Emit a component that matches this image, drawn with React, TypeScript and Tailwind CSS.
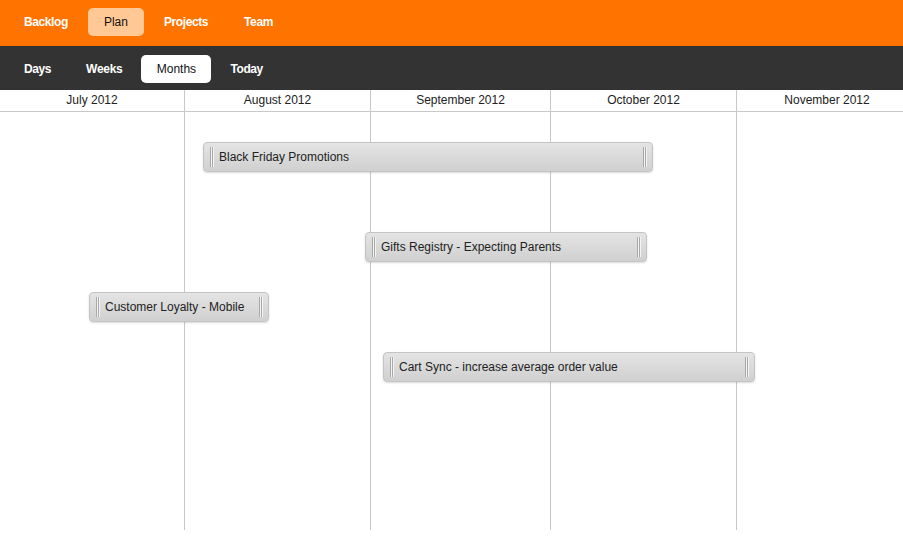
import React from "react";

const months = [
  { label: "July 2012", w: 185 },
  { label: "August 2012", w: 186 },
  { label: "September 2012", w: 180 },
  { label: "October 2012", w: 186 },
  { label: "November 2012", w: 180 },
];

const bars = [
  { label: "Black Friday Promotions", left: 203, top: 142, width: 450 },
  { label: "Gifts Registry - Expecting Parents", left: 365, top: 232, width: 282 },
  { label: "Customer Loyalty - Mobile", left: 89, top: 292, width: 180 },
  { label: "Cart Sync - increase average order value", left: 383, top: 352, width: 372 },
];

function Handle() {
  return (
    <div className="flex h-[20px]">
      <div className="w-[1px] bg-[#a8a8a8]" />
      <div className="w-[1px] bg-[#f4f4f4]" />
      <div className="w-[1px] bg-[#a8a8a8]" />
      <div className="w-[1px] bg-[#f4f4f4]" />
    </div>
  );
}

export default function App() {
  return (
    <div
      className="w-[903px] h-[536px] overflow-hidden bg-white text-[12px]"
      style={{ fontFamily: '"Liberation Sans", Arial, Helvetica, sans-serif' }}
    >
      <div className="h-[46px] bg-[#ff7300] flex items-start pt-[8px] pl-2 gap-1">
        <div className="px-4 h-[28px] flex items-center text-white font-bold tracking-[-0.4px]">Backlog</div>
        <div className="px-4 h-[28px] flex items-center rounded-[5px] bg-[#ffc895] text-[#111]">Plan</div>
        <div className="px-4 h-[28px] flex items-center text-white font-bold tracking-[-0.4px]">Projects</div>
        <div className="px-4 h-[28px] flex items-center text-white font-bold tracking-[-0.4px]">Team</div>
      </div>
      <div className="h-[44px] bg-[#333333] flex items-start pt-[9px] pl-2 gap-[3px]">
        <div className="px-4 h-[28px] flex items-center text-white font-bold tracking-[-0.4px]">Days</div>
        <div className="px-4 h-[28px] flex items-center text-white font-bold tracking-[-0.3px]">Weeks</div>
        <div className="px-[15px] w-[70px] justify-center h-[28px] flex items-center rounded-[5px] bg-white text-[#111]">Months</div>
        <div className="px-4 h-[28px] flex items-center text-white font-bold tracking-[-0.4px]">Today</div>
      </div>
      <div className="relative">
        <div className="flex h-[440px]">
          {months.map((m, i) => (
            <div
              key={m.label}
              className={`shrink-0 flex flex-col ${i < months.length - 1 ? "border-r border-[#c8c8c8]" : ""}`}
              style={{ width: m.w }}
            >
              <div className="h-[22px] pb-[1px] border-b border-[#c8c8c8] flex items-center justify-center text-[#222]">
                {m.label}
              </div>
            </div>
          ))}
        </div>
        <div className="absolute left-0 right-0 top-[21px] h-[1px] bg-[#c8c8c8]" />
        {bars.map((b) => (
          <div
            key={b.label}
            className="absolute h-[30px] rounded-[4px] border border-[#c4c4c4] bg-gradient-to-b from-[#e4e4e4] to-[#d0d0d0] shadow-[0_1px_2px_rgba(0,0,0,0.15)] flex items-center"
            style={{ left: b.left, top: b.top - 90, width: b.width }}
          >
            <div className="pl-[6px]">
              <Handle />
            </div>
            <div className="pl-[5px] text-[#222] whitespace-nowrap flex-1">{b.label}</div>
            <div className="pr-[5px]">
              <Handle />
            </div>
          </div>
        ))}
      </div>
    </div>
  );
}
